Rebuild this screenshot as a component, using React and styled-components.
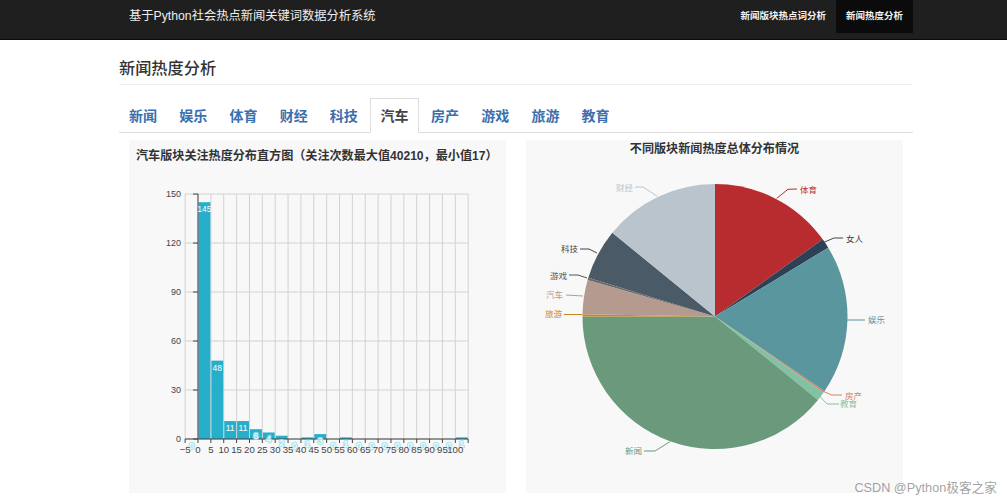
import React from 'react';
import styled, { createGlobalStyle } from 'styled-components';

const GlobalStyle = createGlobalStyle`
html,body{margin:0;padding:0;background:#fff;height:500px;overflow:hidden;}
body{font-family:"Liberation Sans","Noto Sans CJK SC",sans-serif;color:#333;}
*{box-sizing:border-box;}
`;

const Page = styled.div`
position:relative;
width:1007px;
height:500px;
overflow:hidden;
`;

const NavBar = styled.header`
height:40px;
background:#1f1f1f;
border-bottom:1px solid #0a0a0a;
padding:0 94px 0 129px;
display:flex;
justify-content:space-between;
`;

const Brand = styled.div`
font-size:12.25px;
line-height:32px;
color:#eee;
`;

const NavList = styled.nav`
display:flex;
height:33px;
`;

const NavItem = styled.a`
display:block;
padding:0 10px;
font-size:9.5px;
font-weight:700;
line-height:32px;
color:#f2f2f2;
background:${p => (p.$active ? '#0b0b0b' : 'transparent')};
`;

const Content = styled.main`
width:794px;
margin-left:119px;
`;

const PageTitle = styled.h1`
margin:0;
height:45px;
padding-top:17px;
font-size:16.2px;
font-weight:500;
line-height:22px;
color:#333;
border-bottom:1px solid #eee;
`;

const TabBar = styled.ul`
display:flex;
list-style:none;
margin:13px 0 0;
padding:0;
height:35px;
border-bottom:1px solid #ddd;
`;

const Tab = styled.li`
width:${p => (p.$active ? '49px' : '50.2px')};
height:35px;
padding-right:${p => (p.$active ? '0' : '2px')};
margin-right:${p => (p.$active ? '2px' : '0')};
text-align:center;
font-size:14px;
font-weight:600;
line-height:34px;
color:${p => (p.$active ? '#444' : '#3a70ad')};
background:${p => (p.$active ? '#fff' : 'transparent')};
border:1px solid ${p => (p.$active ? '#ddd' : 'transparent')};
border-bottom-color:${p => (p.$active ? '#fff' : 'transparent')};
`;

const Charts = styled.section`
display:grid;
grid-template-columns:377px 377px;
gap:20px;
margin-top:7px;
padding:0 10px;
`;

const Panel = styled.div`
display:flex;
flex-direction:column;
height:353px;
background:#f8f8f8;
`;

const PanelTitle = styled.h3`
margin:0;
padding:${p => p.$top}px 7px 0;
font-size:12.1px;
font-weight:700;
line-height:16px;
color:#333;
text-align:${p => (p.$center ? 'center' : 'left')};
`;

const ChartSvg = styled.svg`
display:block;
flex:1;
`;

const AxisText = styled.text`
font-size:${p => p.$size}px;
fill:#444;
dominant-baseline:central;
`;

const BarLabel = styled.text`
font-size:8.5px;
fill:#fff;
stroke:#9fe0ec;
stroke-width:${p => (p.$halo ? '2.6px' : '0')};
stroke-opacity:.8;
paint-order:stroke;
text-anchor:middle;
dominant-baseline:central;
`;

const SliceLabel = styled.text`
font-size:8.5px;
dominant-baseline:central;
`;

const Watermark = styled.div`
position:absolute;
right:10px;
bottom:3px;
font-size:12.7px;
line-height:18px;
color:rgba(120,120,120,.7);
white-space:nowrap;
`;

const navItems = [
  { label: '新闻版块热点词分析' },
  { label: '新闻热度分析', active: true },
];

const tabs = ['新闻', '娱乐', '体育', '财经', '科技', '汽车', '房产', '游戏', '旅游', '教育'];

// 直方图: 每5一档, 从-5到105
const counts = [0, 145, 48, 11, 11, 6, 4, 2, 0, 1, 3, 0, 1, 0, 0, 0, 0, 0, 0, 0, 0, 1];
const xPos = v => 198 + v * 2.573;
const yPos = v => 439 - v * 1.633;
const xTicks = Array.from({ length: 23 }, (_, i) => -5 + i * 5);
const yTicks = [0, 30, 60, 90, 120, 150];

const Histogram = () => (
  <ChartSvg viewBox="129 164 377 329">
    {xTicks.map(v => (
      <line key={v} x1={xPos(v)} x2={xPos(v)} y1={194} y2={439} stroke="#d2d2d2" strokeWidth="1" />
    ))}
    {yTicks.map(v => (
      <g key={v}>
        <line x1={185} x2={468} y1={yPos(v)} y2={yPos(v)} stroke="#d2d2d2" strokeWidth="1" />
        <line x1={193} x2={198} y1={yPos(v)} y2={yPos(v)} stroke="#444" strokeWidth="1" />
        <AxisText $size={9} x={181} y={yPos(v)} textAnchor="end">{v}</AxisText>
      </g>
    ))}
    {counts.map((c, i) => {
      const v = -5 + i * 5;
      return c > 0 && (
        <rect key={v} x={xPos(v) + 0.5} y={yPos(c)} width={11.9} height={439 - yPos(c)} fill="#27aecb" />
      );
    })}
    <line x1={198} x2={198} y1={194} y2={439} stroke="#444" strokeWidth="1" />
    <line x1={185} x2={468} y1={439} y2={439} stroke="#444" strokeWidth="1" />
    {xTicks.map(v => (
      <line key={v} x1={xPos(v)} x2={xPos(v)} y1={439} y2={443} stroke="#444" strokeWidth="1" />
    ))}
    {counts.map((c, i) => (
      <BarLabel key={i} $halo={c < 8} x={xPos(-5 + i * 5) + 6.4} y={yPos(c) + 7}>{c}</BarLabel>
    ))}
    {xTicks.slice(0, 22).map(v => (
      <AxisText $size={9.6} key={v} x={xPos(v)} y={449.5} textAnchor="middle">{v < 0 ? `−${-v}` : v}</AxisText>
    ))}
  </ChartSvg>
);

// 饼图: 角度从正上方顺时针
const slices = [
  { name: '体育', from: 0, to: 54.4, color: '#b82c2f', line: '776.7,198.3 788,189.3 797,189', x: 800, y: 189.5, anchor: 'start' },
  { name: '女人', from: 54.4, to: 58.7, color: '#2c4155', line: '823,242.7 834,238 843,238', x: 846, y: 238.5, anchor: 'start', text: '#444' },
  { name: '娱乐', from: 58.7, to: 124.3, color: '#5a969e', line: '846.7,320 865,320', x: 868, y: 320, anchor: 'start' },
  { name: '房产', from: 124.3, to: 125, color: '#d48265', line: '821.7,390.7 831.7,395 842,395', x: 845, y: 396, anchor: 'start' },
  { name: '教育', from: 125, to: 129, color: '#82c1a4', line: '820,396.7 827,404 839,404', x: 840, y: 404, anchor: 'start' },
  { name: '新闻', from: 129, to: 270, color: '#6a9a7b', line: '670,441.7 655,451 644,451', x: 642, y: 451, anchor: 'end' },
  { name: '旅游', from: 270, to: 271, color: '#ca8622', line: '582,314.5 564,314.5', x: 562, y: 314, anchor: 'end' },
  { name: '汽车', from: 271, to: 286, color: '#b59a90', line: '583,296 566,295', x: 563, y: 295, anchor: 'end' },
  { name: '游戏', from: 286, to: 287, color: '#6e6a6c', line: '587,278 578,275 569,275', x: 567, y: 275.5, anchor: 'end', text: '#555' },
  { name: '科技', from: 287, to: 309.2, color: '#4a5a66', line: '597,253 589,249 580,249', x: 578, y: 249, anchor: 'end', text: '#444' },
  { name: '财经', from: 309.2, to: 360, color: '#bac4cc', line: '657,196 643,187 635,187', x: 633, y: 187.5, anchor: 'end' },
];

const cx = 715;
const cy = 316.5;
const radius = 132.5;

const slicePath = (from, to) => {
  const rad = a => (a * Math.PI) / 180;
  const px = a => cx + radius * Math.sin(rad(a));
  const py = a => cy - radius * Math.cos(rad(a));
  const large = to - from > 180 ? 1 : 0;
  return `M${cx} ${cy}L${px(from)} ${py(from)}A${radius} ${radius} 0 ${large} 1 ${px(to)} ${py(to)}Z`;
};

const PieChart = () => (
  <ChartSvg viewBox="526 157 377 336">
    {slices.map(s => (
      <path key={s.name} d={slicePath(s.from, s.to)} fill={s.color} />
    ))}
    {slices.map(s => (
      <g key={s.name}>
        <polyline points={s.line} fill="none" stroke={s.text || s.color} strokeWidth="1" />
        <SliceLabel x={s.x} y={s.y} textAnchor={s.anchor} fill={s.text || s.color}>{s.name}</SliceLabel>
      </g>
    ))}
  </ChartSvg>
);

const App = () => (
  <Page>
    <GlobalStyle />
    <NavBar>
      <Brand>基于Python社会热点新闻关键词数据分析系统</Brand>
      <NavList>
        {navItems.map(item => (
          <NavItem key={item.label} $active={item.active}>{item.label}</NavItem>
        ))}
      </NavList>
    </NavBar>
    <Content>
      <PageTitle>新闻热度分析</PageTitle>
      <TabBar>
        {tabs.map(t => (
          <Tab key={t} $active={t === '汽车'}>{t}</Tab>
        ))}
      </TabBar>
      <Charts>
        <Panel>
          <PanelTitle $top={8}>汽车版块关注热度分布直方图（关注次数最大值40210，最小值17）</PanelTitle>
          <Histogram />
        </Panel>
        <Panel>
          <PanelTitle $top={1} $center>不同版块新闻热度总体分布情况</PanelTitle>
          <PieChart />
        </Panel>
      </Charts>
    </Content>
    <Watermark>CSDN @Python极客之家</Watermark>
  </Page>
);

export default App;
